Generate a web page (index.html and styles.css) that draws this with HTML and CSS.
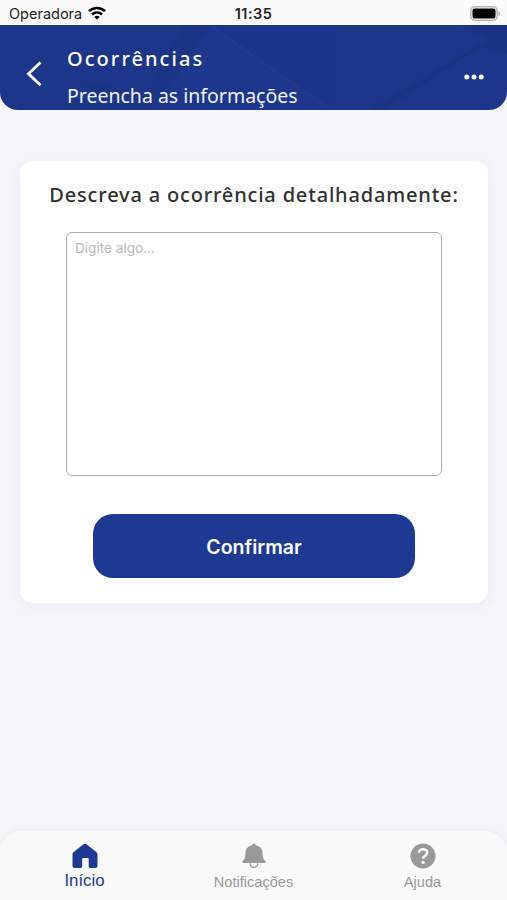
FILE: index.html
```html
<!DOCTYPE html>
<html lang="pt-BR">
<head>
<meta charset="utf-8">
<meta name="viewport" content="width=device-width, initial-scale=1">
<title>Ocorrências</title>
<link rel="stylesheet" href="styles.css">
</head>
<body>
<div class="status">
  <div class="carrier"><span>Operadora</span>
    <svg width="18" height="14" viewBox="0 0 18 14" fill="none" stroke="#000" stroke-width="2.5"><path d="M1 5.2C5.6.9 12.400.9 17 5.2M4 8.500c2.900-2.700 7.100-2.700 10 0"/><path d="M9 13.600 6.300 10.900c1.500-1.400 3.900-1.400 5.400 0z" fill="#000" stroke="none"/></svg>
  </div>
  <span class="clock">11:35</span>
  <svg class="battery" width="31" height="15" viewBox="0 0 31 15"><rect x=".8" y=".8" width="26.400" height="13.400" rx="4" fill="#fff" stroke="#b5b5b3" stroke-width="1.500"/><rect x="2.500" y="2.500" width="23" height="10" rx="2" fill="#000"/><path d="M28.500 5.200c2.300.8 2.300 3.800 0 4.600z" fill="#b5b5b3"/></svg>
</div>
<header class="header">
  <svg class="pattern" viewBox="0 0 507 85" preserveAspectRatio="none"><path d="M184 0h28l-56 76h-49L78 55l69 15z" fill="#19317e" opacity=".35"/><path d="m212 0 120 85H156z" fill="#203b94" opacity=".3"/><path d="m212 2 120 83" stroke="#2a4599" opacity=".6"/><path d="M370 85 488 14 460 0h47v29l-26-7-98 63z" fill="#19317e" opacity=".45"/></svg>
  <svg class="back" width="16" height="26" viewBox="0 0 16 26" fill="none" stroke="#fff" stroke-width="2.800"><path d="M14.500 1.500 2.500 12.800 14.500 24.300"/></svg>
  <div class="titles"><h1>Ocorrências</h1><p>Preencha as informações</p></div>
  <svg class="more" width="20" height="6" viewBox="0 0 20 6" fill="#fff"><circle cx="2.800" cy="3" r="2.500"/><circle cx="10" cy="3" r="2.500"/><circle cx="17.200" cy="3" r="2.500"/></svg>
</header>
<main class="main">
  <section class="card">
    <h2>Descreva a ocorrência detalhadamente:</h2>
    <textarea placeholder="Digite algo..."></textarea>
    <button>Confirmar</button>
  </section>
</main>
<nav class="tabs">
  <div class="tab active"><svg width="26" height="26" viewBox="0 0 26 26"><path d="M14.500 1.300 24 8.700q1.500 1.200 1.500 3V23q0 2-2 2h-5q-1.800 0-1.800-1.800V16q0-1-1-1h-4.500q-1 0-1 1v7.200q0 1.800-1.800 1.800H2.500q-2 0-2-2V11.700q0-1.800 1.500-3L11.500 1.300q1.500-1.200 3 0z" fill="currentColor"/></svg><span>Início</span></div>
  <div class="tab"><svg width="26" height="26" viewBox="0 0 26 26"><path d="M11.300 2.200C11.300-.1 14.700-.1 14.700 2.200 19 3 21.600 6 21.600 10c0 4.500.8 6.300 2.700 8 1 .9.600 2-.6 2H2.300c-1.200 0-1.600-1.100-.6-2 1.900-1.700 2.700-3.500 2.700-8 0-4 2.600-7 6.900-7.800z" fill="currentColor"/><path d="M9.200 20.300c0 5.500 7.600 5.500 7.600 0" fill="none" stroke="currentColor" stroke-width="1.300"/></svg><span>Notificações</span></div>
  <div class="tab"><svg width="26" height="26" viewBox="0 0 26 26"><circle cx="13" cy="13" r="12.500" fill="currentColor"/><path d="M9.100 9.800c0-4.900 8.100-4.800 8.100-.2 0 3.200-4.100 3.100-4.100 6.200" fill="none" stroke="#fafafa" stroke-width="2.500"/><circle cx="13.100" cy="19.400" r="1.700" fill="#fafafa"/></svg><span>Ajuda</span></div>
</nav>
</body>
</html>
```

FILE: styles.css
```css
* { box-sizing: border-box; }
body { margin: 0; height: 900px; display: flex; flex-direction: column; background: #f4f6fa; font-family: Inter, sans-serif; overflow: hidden; }
h1, h2, p { margin: 0; }
svg { display: block; flex: none; }
.status { height: 25px; flex: none; background: #fbfbfb; display: grid; grid-template-columns: 1fr auto 1fr; align-items: center; padding: 1px 6px 0 9px; color: #222; }
.carrier { display: flex; align-items: center; gap: 6px; font-size: 14.500px; }
.clock { font-size: 14.500px; font-weight: 600; letter-spacing: .5px; margin-left: -3px; }
.battery { justify-self: end; }
.header { position: relative; height: 85px; flex: none; background: #1c368a; border-radius: 0 0 18px 18px; overflow: hidden; color: #fff; display: flex; align-items: flex-start; padding: 0 23px 0 26px; }
.pattern { position: absolute; inset: 0; width: 100%; height: 100%; }
.back { position: relative; margin-top: 36px; }
.titles { position: relative; flex: 1; margin-left: 25px; padding-top: 20px; font-family: "Noto Sans", sans-serif; white-space: nowrap; }
.titles h1 { font-size: 20px; line-height: 28px; font-weight: 500; letter-spacing: 2.050px; }
.titles p { font-size: 19.500px; line-height: 28px; margin-top: 9px; color: #f0f3ff; }
.more { position: relative; margin-top: 49px; }
.main { flex: 1; padding: 51px 19px 0 20px; }
.card { height: 442px; border-radius: 13px; background: #fff; box-shadow: 0 3px 14px rgba(60, 70, 60, .06); display: flex; flex-direction: column; align-items: center; padding-top: 20px; }
.card h2 { font: 500 20px/28px "Noto Sans", sans-serif; letter-spacing: .820px; color: #303030; white-space: nowrap; }
textarea { width: 376px; height: 244px; margin: 23px 0 38px; border: 1.500px solid #adadad; border-radius: 6px; padding: 7px 8px; resize: none; outline: 0; background: #fff; font: 13.600px/16px Inter, sans-serif; }
textarea::placeholder { color: #b9b9b9; opacity: 1; }
button { width: 322px; height: 64px; flex: none; border: 0; border-radius: 20px; background: #1d3992; color: #fff; font: 600 19.500px Inter, sans-serif; padding-top: 3px; }
.tabs { height: 69px; flex: none; background: #fafafa; border-radius: 22px 22px 0 0; box-shadow: 0 -2px 8px rgba(60, 70, 80, .04); display: grid; grid-template-columns: repeat(3, 169px); padding-top: 12px; }
.tab { display: flex; flex-direction: column; align-items: center; color: #999; font: 14.600px/18px "Liberation Sans", sans-serif; }
.tab span { margin-top: 4px; }
.tab.active { color: #1d3992; font-size: 16.800px; }
.tab.active span { margin-top: 3px; }
```
